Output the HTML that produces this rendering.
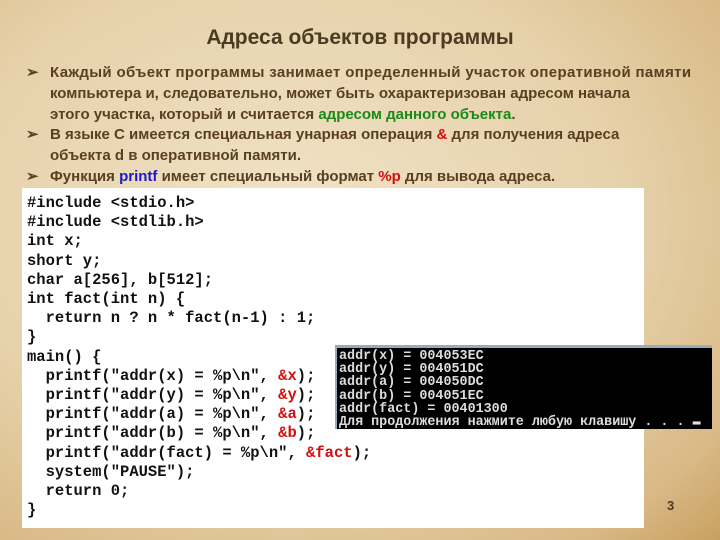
<!DOCTYPE html>
<html><head><meta charset="utf-8"><style>
body{margin:0;width:720px;height:540px;overflow:hidden;position:relative;
background:radial-gradient(ellipse at 40% 40%,#f1e3c6 0%,#e6d1aa 55%,#d9b986 85%,#c9a060 100%);
font-family:"Liberation Sans","Noto Sans CJK SC",sans-serif;}
.t{position:absolute;top:26px;left:0;width:720px;text-align:center;font-size:21px;font-weight:bold;color:#4d3a22;}
.b{position:absolute;left:26px;width:694px;font-size:15px;font-weight:bold;color:#5a4022;line-height:20.8px;white-space:nowrap;top:63px}
.b div{position:relative;padding-left:24px}
.b div span.m{position:absolute;left:0}
.code{position:absolute;left:22px;top:188px;width:622px;height:340px;background:#fff;}
pre{margin:0;position:absolute;left:27px;top:194px;font-family:"Liberation Mono",monospace;font-weight:bold;font-size:15.5px;line-height:19.2px;color:#111;}
.r{color:#d01010}
.con{position:absolute;left:335px;top:345px;width:377px;height:84px;background:#000;border-top:3px solid #9ab;border-left:2px solid #9ab;
font-family:"Liberation Mono",monospace;font-weight:bold;font-size:13.4px;line-height:13.2px;color:#ddd;white-space:pre;padding-top:2px;padding-left:2px;box-sizing:border-box;overflow:hidden}
.n{position:absolute;left:667px;top:498px;font-size:13px;font-weight:bold;color:#4d3a22}
</style></head><body>
<div class="t">Адреса объектов программы</div>
<div class="b">
<div><span class="m">➢</span><span style="letter-spacing:0.35px">Каждый объект программы занимает определенный участок оперативной памяти</span><br>компьютера и, следовательно, может быть охарактеризован адресом начала<br>этого участка, который и считается <span style="color:#1a8a1a">адресом данного объекта</span>.</div>
<div><span class="m">➢</span>В языке C имеется специальная унарная операция <span style="color:#d01010">&amp;</span> для получения адреса<br>объекта d в оперативной памяти.</div>
<div><span class="m">➢</span>Функция <span style="color:#1a1ad0">printf</span> имеет специальный формат <span style="color:#d01010">%p</span> для вывода адреса.</div>
</div>
<div class="code"></div>
<pre>#include &lt;stdio.h&gt;
#include &lt;stdlib.h&gt;
int x;
short y;
char a[256], b[512];
int fact(int n) {
  return n ? n * fact(n-1) : 1;
}
main() {
  printf("addr(x) = %p\n", <span class="r">&amp;x</span>);
  printf("addr(y) = %p\n", <span class="r">&amp;y</span>);
  printf("addr(a) = %p\n", <span class="r">&amp;a</span>);
  printf("addr(b) = %p\n", <span class="r">&amp;b</span>);
  printf("addr(fact) = %p\n", <span class="r">&amp;fact</span>);
  system("PAUSE");
  return 0;
}</pre>
<div class="con">addr(x) = 004053EC
addr(y) = 004051DC
addr(a) = 004050DC
addr(b) = 004051EC
addr(fact) = 00401300
Для продолжения нажмите любую клавишу . . . ▬</div>
<div class="n">3</div>
</body></html>
